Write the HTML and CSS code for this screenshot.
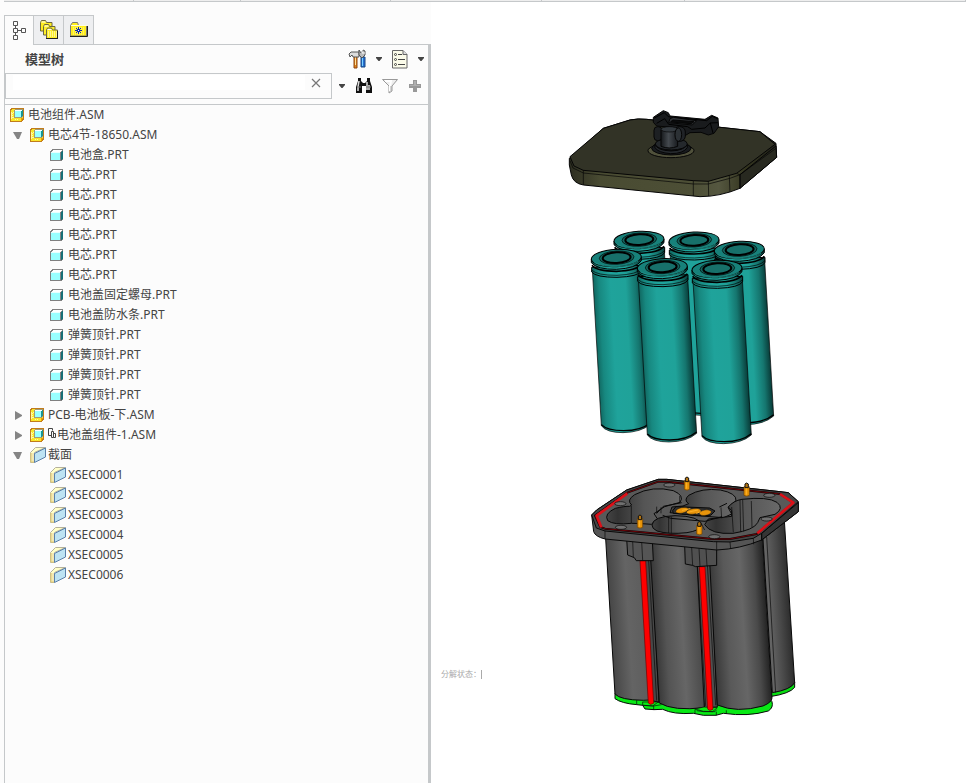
FILE: index.html
```html
<!DOCTYPE html>
<html lang="zh-CN">
<head>
<meta charset="utf-8">
<title>模型树</title>
<link rel="stylesheet" href="styles.css">
</head>
<body>
<svg class="defs" width="0" height="0" aria-hidden="true">
  <symbol id="asm" viewBox="0 0 14 14">
    <path d="M0 1L1 0H14V11L11 14H0Z" fill="#c07c1c"/>
    <path d="M1 2L2 1H5V9H13V10L10 13H1Z" fill="#fbe62a"/>
    <path d="M1 4h1v1h1v1H2v1h1v1H2v1h1v1H2v1H1zM5 11h1v1H5zM7 11h1v1H7zM3 4h1v1H3zM3 9h1v1H3z" fill="#fffaa0"/>
    <path d="M11 10h2v1h-1v2h-1z" fill="#f0a000"/>
    <path d="M4 2L5 1H13V8L12 10H4Z" fill="#a09a78"/>
    <path d="M5 2h7v1H5z" fill="#fff"/>
    <path d="M5 3h6v6H5z" fill="#9ff"/><path d="M11 3l1-1h1v6l-2 1z" fill="#1b9494"/>
  </symbol>
  <symbol id="prt" viewBox="0 0 14 14">
    <path d="M0 4V3L3 1H13V11L11 13H0Z" fill="#808080"/>
    <path d="M1 4L4 2H12L10 4Z" fill="#fff"/>
    <path d="M1 4h9v8H1z" fill="#9ff"/><path d="M1 4h9v1H1z" fill="#e8ffff"/><path d="M11 4l2-2v9l-2 1z" fill="#176f77"/>
  </symbol>
  <symbol id="sec" viewBox="0 0 16 16">
    <path d="M0.5 5.5L5.5 .5H15.5L4.5 5.5V15.5H.5Z" fill="#ffffc8" stroke="#b5b19c"/>
    <path d="M1 6h3v9H1z" fill="#f3e8b4"/><path d="M1 6v9h3" fill="none" stroke="#e5ce72"/>
    <path d="M4.5 6.5L15.5 1V10L4.5 15.5Z" fill="#bde3f3" stroke="#5a7fa8"/>
  </symbol>
  <symbol id="down" viewBox="0 0 10 10"><path d="M0 2h9L6 9H4z" fill="#858585"/></symbol>
  <symbol id="right" viewBox="0 0 10 10"><path d="M2 1l7 4v1l-7 4z" fill="#858585"/></symbol>
  <symbol id="menu" viewBox="0 0 10 10"><path d="M2 3h6v1L5.500 7h-1L2 4z" fill="#444"/></symbol>
</svg>
<div class="ribbon"><i></i><i></i><i></i><i></i><i></i><i></i></div>
<main class="workspace">
  <section class="navigator">
    <nav class="tabs">
      <button class="tab active" aria-label="模型树">
        <svg width="14" height="20" viewBox="0 0 14 20"><g fill="none" stroke="#555"><path d="M1.500 .5h4v4h-4zM1.500 7.500h4v4h-4zM1.500 14.500h4v4h-4zM9.500 7.500h4v4h-4zM3.500 5v3M3.500 12v3M6 9.500h3"/></g></svg>
      </button>
      <button class="tab" aria-label="文件夹">
        <svg width="18" height="20" viewBox="0 0 18 20"><g stroke="#6d6840"><path d="M.5 11V2.500l1-2h4l1 2H12V11Z" fill="#ffed20"/><path d="M3.500 15V6.500l1-2h4l1 2H15V15Z" fill="#fff02a"/><path d="M6.500 18.500V10l1-2h4l1 2h5v8.500Z" fill="#fff02a"/></g><path d="M1.500 2h4M4.500 6h4M7.500 9.500h4" stroke="#fff"/><path d="M8 12h9M8 14h9M8 16h9" stroke="#fff" stroke-dasharray="1 1"/><path d="M6 18.500h12M17.500 11v8" stroke="#222"/></svg>
      </button>
      <button class="tab" aria-label="收藏夹">
        <svg width="18" height="18" viewBox="0 0 18 18"><path d="M.5 15V4.500l2-3h5l1 3h8V15Z" fill="#ffee1c" stroke="#777"/><path d="M1 4.500h16" stroke="#fffde0"/><path d="M3 7h12M3 9h12M3 11h12M3 13h12" stroke="#fff8a0" stroke-dasharray="1 1"/><path d="M0 15.500h17.500V5" fill="none" stroke="#222"/><path d="M8.500 6v7M5 9.500h7M6 7l5 5M11 7l-5 5" stroke="#0a28b4"/><path d="M8 9h1v1H8z" fill="#fff"/></svg>
      </button>
    </nav>
    <div class="panel">
      <header class="heading">
        <h1>模型树</h1>
        <div class="title-tools">
          <button aria-label="设置"><svg width="20" height="20" viewBox="0 0 20 20"><path d="M7 7h3v12H7z" fill="#df8519" stroke="#8c4313"/><path d="M8 7h1v9H8z" fill="#ffe09a"/><path d="M14 8h4v10h-4z" fill="#2870d4" stroke="#194780"/><path d="M15 9h1v8h-1z" fill="#7bd2ff"/><path d="M2 5l2-2h8v5H6L5 6 3 8Z" fill="#ddd" stroke="#555"/><path d="M12 1l2 3 2-3 2 1v4l-3 3-3-3z" fill="#bbb" stroke="#555"/><path d="M15 0v4h3" stroke="#fff" fill="none"/></svg></button>
          <button aria-label="设置菜单"><svg width="10" height="10"><use href="#menu"/></svg></button>
          <button aria-label="显示"><svg width="18" height="20" viewBox="0 0 18 20"><path d="M1.500 1.500H12l4 4V19H1.500Z" fill="#fbfbe9" stroke="#666"/><path d="M12 1.500v4h4" fill="#ddd" stroke="#666"/><g fill="none" stroke="#444"><circle cx="4.500" cy="5.500" r="1"/><circle cx="4.500" cy="10.500" r="1"/><circle cx="4.500" cy="15.500" r="1"/><path d="M7 5.500h4M7 10.500h7M7 15.500h7"/></g></svg></button>
          <button aria-label="显示菜单"><svg width="10" height="10"><use href="#menu"/></svg></button>
        </div>
      </header>
      <div class="search">
        <div class="search-box">
          <input type="text" aria-label="搜索">
          <button aria-label="清除"><svg width="10" height="10" viewBox="0 0 10 10"><path d="M1 1l8 8M9 1L1 9" stroke="#777" stroke-width="1.200"/></svg></button>
        </div>
        <div class="search-tools">
          <button aria-label="搜索选项"><svg width="10" height="10"><use href="#menu"/></svg></button>
          <button aria-label="查找"><svg width="18" height="16" viewBox="0 0 18 16"><path d="M3 0h3v3l2 2h2l2-2V0h3v3l2 6v6h-6V8H7v7H1V9l2-6Z" fill="#111"/><path d="M4 3L3 9v4M12 4v8M14 7v5" fill="none" stroke="#ddd" stroke-width="1.500"/><path d="M2 9h4M11 9h5" stroke="#777"/></svg></button>
          <button aria-label="过滤"><svg width="18" height="16" viewBox="0 0 18 16"><path d="M1.500 1.500h15L11 8v5l-3 2V8Z" fill="#eee" stroke="#999"/><path d="M4 3h6L9 8v5" fill="none" stroke="#fff" stroke-width="2"/><path d="M10 8v5" stroke="#aaa"/></svg></button>
          <button aria-label="添加"><svg width="16" height="16" viewBox="0 0 16 16"><path d="M6 2h4v4h4v4h-4v4H6v-4H2V6h4Z" fill="#999"/><path d="M7 3h2v4h4v1H3V7h4z" fill="#b0b0b0"/></svg></button>
        </div>
      </div>
      <ul class="tree">
        <li><div class="row"><svg class="asm"><use href="#asm"/></svg><span>电池组件.ASM</span></div>
        <ul>
          <li><div class="row"><button class="toggle" aria-label="折叠"><svg width="10" height="10"><use href="#down"/></svg></button><svg class="asm"><use href="#asm"/></svg><span>电芯4节-18650.ASM</span></div>
          <ul class="leaves">
            <li class="row"><svg class="asm"><use href="#prt"/></svg><span>电池盒.PRT</span></li>
            <li class="row"><svg class="asm"><use href="#prt"/></svg><span>电芯.PRT</span></li>
            <li class="row"><svg class="asm"><use href="#prt"/></svg><span>电芯.PRT</span></li>
            <li class="row"><svg class="asm"><use href="#prt"/></svg><span>电芯.PRT</span></li>
            <li class="row"><svg class="asm"><use href="#prt"/></svg><span>电芯.PRT</span></li>
            <li class="row"><svg class="asm"><use href="#prt"/></svg><span>电芯.PRT</span></li>
            <li class="row"><svg class="asm"><use href="#prt"/></svg><span>电芯.PRT</span></li>
            <li class="row"><svg class="asm"><use href="#prt"/></svg><span>电池盖固定螺母.PRT</span></li>
            <li class="row"><svg class="asm"><use href="#prt"/></svg><span>电池盖防水条.PRT</span></li>
            <li class="row"><svg class="asm"><use href="#prt"/></svg><span>弹簧顶针.PRT</span></li>
            <li class="row"><svg class="asm"><use href="#prt"/></svg><span>弹簧顶针.PRT</span></li>
            <li class="row"><svg class="asm"><use href="#prt"/></svg><span>弹簧顶针.PRT</span></li>
            <li class="row"><svg class="asm"><use href="#prt"/></svg><span>弹簧顶针.PRT</span></li>
          </ul></li>
          <li class="row"><button class="toggle" aria-label="展开"><svg width="10" height="10"><use href="#right"/></svg></button><svg class="asm"><use href="#asm"/></svg><span>PCB-电池板-下.ASM</span></li>
          <li class="row"><button class="toggle" aria-label="展开"><svg width="10" height="10"><use href="#right"/></svg></button><svg class="asm"><use href="#asm"/></svg><svg class="linked" viewBox="0 0 9 14"><path d="M3.500 7.500h-3v-7h4v2M3.500 3.500h2v6h-2zM5.500 5.500h2v4h-2" fill="none" stroke="#444"/></svg><span>电池盖组件-1.ASM</span></li>
          <li><div class="row"><button class="toggle" aria-label="折叠"><svg width="10" height="10"><use href="#down"/></svg></button><svg class="section"><use href="#sec"/></svg><span>截面</span></div>
          <ul class="leaves">
            <li class="row"><svg class="section"><use href="#sec"/></svg><span>XSEC0001</span></li>
            <li class="row"><svg class="section"><use href="#sec"/></svg><span>XSEC0002</span></li>
            <li class="row"><svg class="section"><use href="#sec"/></svg><span>XSEC0003</span></li>
            <li class="row"><svg class="section"><use href="#sec"/></svg><span>XSEC0004</span></li>
            <li class="row"><svg class="section"><use href="#sec"/></svg><span>XSEC0005</span></li>
            <li class="row"><svg class="section"><use href="#sec"/></svg><span>XSEC0006</span></li>
          </ul></li>
        </ul></li>
      </ul>
    </div>
  </section>
  <section class="viewport">
    <svg class="model" viewBox="431 2 535 781" preserveAspectRatio="xMinYMin meet" role="img" aria-label="电池组件分解图">
      <defs>
        <linearGradient id="teal" gradientUnits="userSpaceOnUse" x1="-74" y1="4" x2="76" y2="-4"><stop stop-color="#10665f"/><stop offset=".12" stop-color="#178880"/><stop offset=".35" stop-color="#1fa39b"/><stop offset=".65" stop-color="#1fa299"/><stop offset=".85" stop-color="#15766f"/><stop offset="1" stop-color="#083a37"/></linearGradient>
        <linearGradient id="g1" gradientUnits="userSpaceOnUse" x1="78" y1="300" x2="195" y2="293"><stop stop-color="#444"/><stop offset=".5" stop-color="#646464"/><stop offset="1" stop-color="#5c5c5c"/></linearGradient>
        <linearGradient id="g2" gradientUnits="userSpaceOnUse" x1="212" y1="300" x2="355" y2="292"><stop stop-color="#363636"/><stop offset=".25" stop-color="#545454"/><stop offset=".6" stop-color="#666"/><stop offset="1" stop-color="#484848"/></linearGradient>
        <linearGradient id="g3" gradientUnits="userSpaceOnUse" x1="390" y1="300" x2="554" y2="290"><stop stop-color="#3a3a3a"/><stop offset=".25" stop-color="#595959"/><stop offset=".55" stop-color="#666"/><stop offset=".8" stop-color="#4a4a4a"/><stop offset="1" stop-color="#202020"/></linearGradient>
        <linearGradient id="g4" gradientUnits="userSpaceOnUse" x1="560" y1="300" x2="626" y2="296"><stop stop-color="#646464"/><stop offset=".5" stop-color="#484848"/><stop offset="1" stop-color="#2a2a2a"/></linearGradient>
        <linearGradient id="hole"><stop stop-color="#444"/><stop offset=".15" stop-color="#333"/><stop offset=".5" stop-color="#555"/><stop offset="1" stop-color="#696969"/></linearGradient>
        <linearGradient id="olive"><stop stop-color="#2c2d20"/><stop offset=".15" stop-color="#494b32"/><stop offset=".6" stop-color="#4d4f36"/><stop offset=".72" stop-color="#555740"/><stop offset=".85" stop-color="#34351f"/><stop offset="1" stop-color="#20211a"/></linearGradient>
        <linearGradient id="metal"><stop stop-color="#15181b"/><stop offset=".45" stop-color="#44494e"/><stop offset="1" stop-color="#181b1f"/></linearGradient>
        <g id="cell" stroke="#000" stroke-width="2">
          <path d="M-72 34L-45 503Q-30 524 20 524Q75 523 103 498L76 30Z" fill="url(#teal)"/>
          <path d="M-45 500Q-28 518 22 518Q73 518 103 494" fill="none" stroke-width="4"/>
          <path d="M-74 28V42Q-62 58 2 58Q67 56 77 38V22Z" fill="url(#teal)" stroke-width="3"/>
          <path d="M-73 37Q-58 52 2 52Q63 49 77 32" fill="none"/>
          <path d="M-73 22Q-60 40 0 40Q61 38 75 19" fill="none" stroke-width="5"/>
          <path d="M-75 3V14Q-58 35 0 34Q60 31 75 8V-3Z" fill="url(#teal)" stroke-width="3"/>
          <ellipse rx="75" ry="26" transform="rotate(-3)" fill="#17817a" stroke-width="3"/>
          <path d="M-66 14Q-40 27 5 26Q50 22 66 9" fill="none" stroke="#28aaa0"/>
          <ellipse cx="1" cy="-1" rx="52" ry="20" transform="rotate(-3)" fill="#14665f"/>
          <ellipse cx="1" cy="-1" rx="42" ry="16" transform="rotate(-3)" fill="#17706a" stroke-width="6"/>
        </g>
        <g id="pin"><path d="M-8 0V26Q0 31 8 26V0Z" fill="#e89408" stroke="#704000" stroke-width="2"/><path d="M-5 3V-8Q0-14 5-8V3Z" fill="#b27310" stroke="#111" stroke-width="3"/><path d="M-1 5v19" stroke="#ffb52b" stroke-width="3"/></g>
      </defs>
      <g transform="translate(560 100) scale(.3333)" stroke-linejoin="round" stroke="#050505" stroke-width="3">
        <path d="M28 175L130 85L210 60Q235 55 260 58L600 95L648 130L650 172L540 265Q480 290 420 290L70 255Q40 250 34 225L28 195Z" fill="url(#olive)"/>
        <path d="M540 224L648 138L650 172L540 265Z" fill="#282920"/>
        <path d="M30 170L130 85L210 60Q235 55 260 58L600 95L645 133L530 220L445 244L400 242L70 211L42 198Z" fill="#323326"/>
        <path d="M30 182L39 204L70 219L400 252L445 252L510 235L540 224L648 145M70 210V255M400 242V288M445 243L446 288M508 227L510 276M530 220L540 225V265" fill="none" stroke-width="2"/>
        <ellipse cx="333" cy="152" rx="69" ry="21" fill="#50513b"/>
        <ellipse cx="334" cy="145" rx="59" ry="20" fill="#181b1e"/>
        <path d="M285 132Q290 151 332 153Q374 152 382 132V143Q370 161 332 161Q294 158 285 143Z" fill="#25292d"/>
        <ellipse cx="334" cy="132" rx="48" ry="18" fill="#24282c"/>
        <path d="M280 52L310 32L325 38L330 48L435 58L455 46L474 54L476 80L462 100L445 105L423 97L390 98L370 110L335 82L290 78L280 67Z" fill="#191b1d"/>
        <path d="M283 54L313 38L325 50L440 62L457 49L473 56M290 70L314 56L326 73L383 80L395 88L435 84L451 69L474 68M451 69L459 99" fill="none" stroke="#000"/>
        <path d="M330 56L340 52L410 62L397 75L326 68Z" fill="#303337"/><path d="M338 60L402 65L394 71L332 66Z" fill="#0a0b0c"/>
        <rect x="282" y="80" width="24" height="42" rx="11" fill="#1d2023"/>
        <rect x="342" y="80" width="34" height="44" rx="16" fill="#202327"/>
        <path d="M303 90Q327 72 353 90V139Q328 149 303 139Z" fill="url(#metal)"/>
        <ellipse cx="328" cy="88" rx="25" ry="8" fill="#343a3f" stroke-width="2"/>
        <ellipse cx="355" cy="104" rx="10" ry="20" fill="#2c3135"/>
      </g>
      <g transform="translate(580 225) scale(.3333)">
        <use href="#cell" x="177" y="45"/><use href="#cell" x="342" y="47"/><use href="#cell" x="478" y="75"/>
        <use href="#cell" x="109" y="99"/><use href="#cell" x="247" y="127"/><use href="#cell" x="411" y="132"/>
      </g>
      <g transform="translate(580 470) scale(.3333)" stroke="#080808" stroke-width="3" stroke-linejoin="round">
        <path d="M570 665L644 636V652Q630 671 570 680Z" fill="#08dc12"/>
        <path d="M105 670V686Q124 700 170 704L188 706L195 717L222 719L248 718Q280 734 340 730L370 736L408 736L430 730Q505 741 565 723Q581 713 576 695L555 670Z" fill="#08e915"/>
        <path d="M76 190L105 672Q120 690 190 691L210 690L180 190Z" fill="url(#g1)"/>
        <path d="M548 190L577 668Q633 659 644 638L613 150Z" fill="url(#g4)"/>
        <path d="M182 190L209 690L237 697L212 190Z" fill="#484848"/>
        <path d="M326 210L373 713L412 711L390 210Z" fill="#505050"/>
        <path d="M208 200L238 699Q280 724 373 713L348 210Z" fill="url(#g2)"/>
        <path d="M385 200L412 705Q470 730 549 708Q576 697 576 684L548 210Z" fill="url(#g3)"/>
        <path d="M188 696H235L218 708L188 706ZM345 717L372 711L412 713L398 725L370 724Z" fill="#08e915" stroke-width="2"/>
        <path d="M205 255L230 692M352 280L377 708M382 280L407 706M560 200L587 668" fill="none" stroke-width="2"/>
        <path d="M180 272H197L221 700Q211 707 205 699Z" fill="#f00" stroke="#700000" stroke-width="2"/>
        <path d="M358 290H375L399 718Q388 725 383 717Z" fill="#f00" stroke="#700000" stroke-width="2"/>
        <path d="M170 691V704M188 706L221 708L245 704M221 708V719M345 718V731M350 722L370 725H405L410 719M409 725V736M439 721V732" fill="none" stroke-width="2"/>
        <path d="M140 205L143 255L163 263L169 272H220L217 210Z" fill="#555"/><path d="M158 212L160 261M185 215L188 271" stroke-width="2"/>
        <path d="M314 225L316 282L337 286L347 290L410 286V235Z" fill="#505050"/><path d="M335 232L338 286M357 235L360 289M378 236L381 288" stroke-width="2"/>
        <path d="M35 135L50 120L140 60L235 28L260 28L600 65L625 68L655 95V125L545 210Q480 237 410 240L75 207Q46 200 41 185Z" fill="#555"/>
        <path d="M545 190L655 98V125L545 210Z" fill="#353535"/>
        <path d="M35 135L50 120L140 60L235 28L260 28L600 65L625 68L655 95L545 190L520 205L450 216L400 215L75 183L49 174Z" fill="#454545"/>
        <path d="M75 183V207M410 215V240M450 216L452 236M520 205L521 223M545 190V210" stroke-width="2"/>
        <path d="M45 137L142 68L235 35L260 35L600 72L640 98L530 192L450 207L400 207L75 176L61 171Z" fill="#595959" stroke-width="6"/>
        <path d="M45 137L142 68L235 35L260 35L600 72L640 98L530 192L450 207L400 207L75 176L61 171Z" fill="none" stroke="#a00008" stroke-width="2"/>
        <path d="M64 172L50 137L142 70M600 72L640 98L532 190" fill="none" stroke="#dc1018" stroke-width="8"/>
        <path d="M155 105Q138 91 164 74Q218 46 280 62Q315 77 300 97L254 110L222 131L232 146L214 163Q181 160 154 160Q102 166 83 152Q71 131 106 115Q135 108 149 109Z" fill="url(#hole)"/>
        <path d="M154 108V159M230 110V130M243 112V130M299 99V78" stroke-width="2"/>
        <path d="M326 101Q310 91 326 76Q365 53 421 60Q471 70 468 92L444 112L455 132L431 143L350 137L270 128L276 111L309 108Z" fill="url(#hole)"/>
        <path d="M374 164L385 147L455 139V122L445 111Q460 92 486 88Q564 79 591 97Q614 115 585 133L540 143L533 158Q522 180 459 190Q393 194 374 164Z" fill="url(#hole)"/>
        <path d="M480 90L482 186M488 89L491 184M514 93L516 171M455 111L460 187M423 112L425 145" stroke-width="2"/>
        <path d="M216 165Q219 139 285 137Q359 138 366 165Q360 182 321 188Q265 194 231 183Q216 176 216 165Z" fill="url(#hole)"/>
        <path d="M266 140V189M274 140V190M366 165L374 180" stroke-width="2"/>
        <path d="M230 130L250 109L305 98M248 136L272 145L375 154L426 140M441 100L418 111" fill="none" stroke-width="3"/>
        <path d="M278 122L288 110L389 114L405 123L392 136L365 137L280 130Z" fill="#303030"/>
        <g fill="#e8940b" stroke-width="1"><ellipse cx="306" cy="121" rx="19" ry="8" transform="rotate(-12 306 121)"/><ellipse cx="341" cy="124" rx="22" ry="8" transform="rotate(-8 341 124)"/><ellipse cx="376" cy="128" rx="18" ry="8" transform="rotate(-9 376 128)"/></g>
        <path d="M322 127L354 120M306 121L331 116M349 130L362 125" stroke="#fdb129"/>
        <g fill="#707070" stroke-width="2"><ellipse cx="268" cy="45" rx="17" ry="6"/><ellipse cx="121" cy="101" rx="17" ry="6"/><ellipse cx="123" cy="172" rx="17" ry="6"/><ellipse cx="568" cy="76" rx="17" ry="6"/><ellipse cx="560" cy="147" rx="17" ry="6"/><ellipse cx="403" cy="200" rx="17" ry="6"/></g>
        <use href="#pin" x="321" y="32"/><use href="#pin" x="500" y="50"/><use href="#pin" x="180" y="146"/><use href="#pin" x="358" y="166"/>
      </g>
    </svg>
    <p class="state">分解状态： <b></b></p>
  </section>
</main>
</body>
</html>
```
FILE: styles.css
```css
* { box-sizing: border-box; }
body {
  margin: 0;
  min-height: 100vh;
  display: flex;
  flex-direction: column;
  background: #fcfcfc;
  color: #444;
  font: 12px/20px "Noto Sans", "Noto Sans CJK SC", sans-serif;
}
button { padding: 0; border: 0; background: none; display: flex; align-items: center; justify-content: center; }
svg { display: block; flex: none; }
ul { list-style: none; margin: 0; padding: 0; }
.defs { position: absolute; }
.ribbon {
  height: 2px;
  margin-left: 4px;
  border-bottom: 1px solid #c5c8ca;
  background: #eee;
  display: grid;
  grid-template-columns: 130px 107px 150px 151px 143px 1fr;
}
.ribbon i { border-right: 1px solid #c5c8ca; }
.workspace { flex: 1; display: flex; }
.navigator { flex: none; width: 431px; padding: 13px 0 0 4px; display: flex; flex-direction: column; }
.tabs { display: flex; height: 29px; }
.tab { width: 30px; border: 1px solid #c5c8ca; border-width: 1px 1px 0 0; background: #eeeff1; }
.tab.active { border-left-width: 1px; background: #fcfcfc; height: 30px; z-index: 1; }
.panel { flex: 1; border: 1px solid #c5c8ca; border-width: 1px 3px 0 1px; }
.heading { display: flex; align-items: center; justify-content: space-between; height: 28px; padding: 0 2px 0 20px; }
h1 { margin: 0; font-size: 13px; line-height: 20px; font-weight: 700; }
.title-tools { display: flex; align-items: center; gap: 7px; }
.search { display: flex; height: 32px; padding-bottom: 5px; border-bottom: 1px solid #c5c8ca; }
.search-box { flex: 1; display: flex; border: 1px solid #c5c8ca; padding: 1px 10px 8px 7px; gap: 6px; }
.search-box input { flex: 1; min-width: 0; border: 0; padding: 0; background: #fff; font: inherit; }
.search-tools { display: flex; align-items: center; gap: 8px; padding: 0 5px; }
.tree { color: #444; }
.row { display: flex; align-items: center; height: 20px; padding-left: 5px; white-space: nowrap; }
.leaves .row { padding-left: 45px; }
.toggle { width: 20px; justify-content: flex-start; padding-left: 3px; }
.asm { width: 14px; height: 14px; margin-right: 4px; shape-rendering: crispEdges; }
.section { width: 16px; height: 16px; margin-right: 2px; }
.linked { width: 9px; height: 14px; }
.viewport { flex: 1; min-width: 0; background: #fff; position: relative; }
.model { width: 100%; }
.state {
  position: absolute;
  left: 10px;
  top: 666px;
  margin: 0;
  display: flex;
  align-items: center;
  color: #aaa;
  font: 8px/12px "Noto Sans CJK SC", sans-serif;
}
.state b { width: 1px; height: 9px; background: #aaa; }
```
